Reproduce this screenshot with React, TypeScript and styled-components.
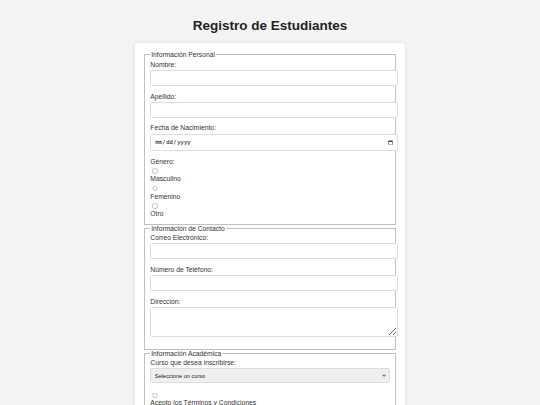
import React from 'react';
import styled, { createGlobalStyle } from 'styled-components';

const GlobalStyle = createGlobalStyle`
  html {
    zoom: 0.421875;
  }
  body {
    margin: 0;
    padding: 20px;
    font-family: "Liberation Sans", Arial, sans-serif;
    background-color: #f4f4f4;
    color: #333;
  }
`;

const Title = styled.h1`
  text-align: center;
  color: #222;
  font-size: 32px;
  margin: 22px 0 24px;
`;

const FormCard = styled.form`
  max-width: 600px;
  margin: 0 auto;
  background: #fff;
  padding: 20px;
  border-radius: 8px;
  box-shadow: 0 0 10px rgba(0, 0, 0, 0.1);
`;

const Section = styled.fieldset`
  margin: 0 2px;
  padding: 0.35em 0.75em 0.625em;
  border: 2px groove #c0c0c0;
`;

const Legend = styled.legend`
  padding: 0 2px;
`;

const Label = styled.label`
  display: block;
  margin-bottom: 5px;
`;

const TextInput = styled.input`
  width: 100%;
  padding: 10px 8px;
  margin-bottom: 15px;
  border: 1px solid #ddd;
  border-radius: 4px;
`;

const TextArea = styled.textarea`
  width: 100%;
  padding: 10px 8px;
  margin-bottom: 15px;
  border: 1px solid #ddd;
  border-radius: 4px;
  height: 48px;
  resize: vertical;
`;

const SelectWrap = styled.div`
  position: relative;
  margin-bottom: 15px;
`;

const Select = styled.select`
  display: block;
  width: 100%;
  height: 34px;
  padding: 0 8px;
  border: 1px solid #ddd;
  border-radius: 4px;
  background: #efefef;
  color: #222;
  font-size: 13.33px;
  appearance: none;
`;

const Chevron = styled.svg`
  position: absolute;
  right: 9px;
  top: 13px;
  pointer-events: none;
`;

const Choice = styled.input<{ $kind: 'radio' | 'checkbox' }>`
  margin: ${(p) => (p.$kind === 'radio' ? '4px 3px 3px 5px' : '8px 3px 3px 4px')};
`;

export default function App() {
  return (
    <>
      <GlobalStyle />
      <Title>Registro de Estudiantes</Title>
      <FormCard onSubmit={(e) => e.preventDefault()}>
        <Section>
          <Legend>Información Personal</Legend>
          <Label htmlFor="nombre">Nombre:</Label>
          <TextInput type="text" id="nombre" />
          <Label htmlFor="apellido">Apellido:</Label>
          <TextInput type="text" id="apellido" />
          <Label htmlFor="fecha">Fecha de Nacimiento:</Label>
          <TextInput type="date" id="fecha" />
          <Label>Género:</Label>
          <Choice $kind="radio" type="radio" name="genero" id="m" />
          <Label htmlFor="m">Masculino</Label>
          <Choice $kind="radio" type="radio" name="genero" id="f" />
          <Label htmlFor="f">Femenino</Label>
          <Choice $kind="radio" type="radio" name="genero" id="o" />
          <Label htmlFor="o">Otro</Label>
        </Section>
        <Section>
          <Legend>Información de Contacto</Legend>
          <Label htmlFor="correo">Correo Electrónico:</Label>
          <TextInput type="email" id="correo" />
          <Label htmlFor="tel">Número de Teléfono:</Label>
          <TextInput type="tel" id="tel" />
          <Label htmlFor="dir">Dirección:</Label>
          <TextArea id="dir" />
        </Section>
        <Section>
          <Legend>Información Académica</Legend>
          <Label htmlFor="curso">Curso que desea inscribirse:</Label>
          <SelectWrap>
            <Select id="curso" defaultValue="">
              <option value="">Seleccione un curso</option>
              <option value="mat">Matemáticas</option>
              <option value="fis">Física</option>
            </Select>
            <Chevron width="10" height="8" viewBox="0 0 10 8">
              <path d="M1.5 1.5L5 5.5l3.5-4" fill="none" stroke="#333" strokeWidth="2.2" />
            </Chevron>
          </SelectWrap>
          <Choice $kind="checkbox" type="checkbox" id="terminos" />
          <Label htmlFor="terminos">Acepto los Términos y Condiciones</Label>
        </Section>
      </FormCard>
    </>
  );
}
